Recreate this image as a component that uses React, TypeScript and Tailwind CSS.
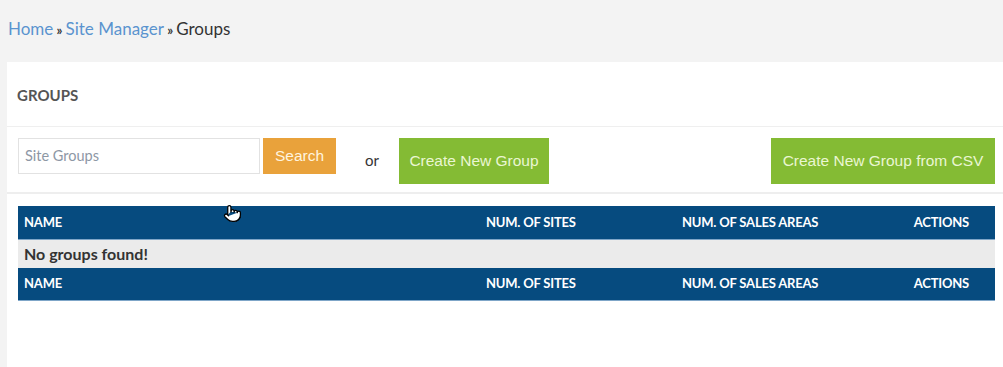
import React from "react";
import { Pointer } from "lucide-react";

const cols = (
  <>
    <div className="flex-1 pl-[6px]">NAME</div>
    <div className="w-[196px]">NUM. OF SITES</div>
    <div className="w-[230px]">NUM. OF SALES AREAS</div>
    <div className="w-[83px] text-right pr-[26px]">ACTIONS</div>
  </>
);

export default function App() {
  return (
    <div className="relative w-[1003px] h-[367px] bg-[#f3f3f3] overflow-hidden font-['Lato','Open_Sans',sans-serif]">
      <div className="h-[62px] pl-[8px] pt-[17px] text-[17px] leading-[24px]">
        <span className="text-[#5a93cf]">Home</span>
        <span className="text-[#333] text-[13px] font-bold"> » </span>
        <span className="text-[#5a93cf]">Site Manager</span>
        <span className="text-[#333] text-[13px] font-bold"> » </span>
        <span className="text-[#333]">Groups</span>
      </div>
      <div className="ml-[7px] bg-white h-[305px]">
        <div className="h-[65px] flex items-center pl-[10px] pt-[3px] text-[15px] font-bold text-[#555] border-b border-[#efefef]">
          GROUPS
        </div>
        <div className="h-[67px] flex items-center pl-[11px] pr-[8px] border-b-2 border-[#eeeeee] font-['Liberation_Sans',Arial,sans-serif]">
          <div className="w-[242px] h-[36px] border border-[#e2e2e2] flex items-center pl-[6px] text-[14.5px] text-[#8d97a5] mt-[-8px] font-['Lato',sans-serif]">
            Site Groups
          </div>
          <div className="ml-[3px] w-[73px] h-[36px] bg-[#e9a23b] text-[#fff4df] text-[15.5px] flex items-center justify-center mt-[-8px]">
            Search
          </div>
          <div className="ml-[29px] w-[34px] text-[15px] text-[#333] font-['Lato',sans-serif] mt-[2px]">or</div>
          <div className="w-[150px] h-[46px] bg-[#84bb34] text-[#eaf6d2] text-[15.5px] flex items-center justify-center mt-[2px]">
            Create New Group
          </div>
          <div className="flex-1" />
          <div className="w-[224px] h-[46px] bg-[#84bb34] text-[#eaf6d2] text-[15.5px] flex items-center justify-center mt-[2px]">
            Create New Group from CSV
          </div>
        </div>
        <div className="pl-[11px] pr-[8px] pt-[12px]">
          <div className="h-[34px] bg-[#064b7f] text-white text-[13px] font-bold tracking-[-0.2px] flex items-center border-b border-[#7fa6c8]">
            {cols}
          </div>
          <div className="h-[28px] bg-[#ebebeb] text-[#333] text-[16px] font-bold flex items-center pl-[6px]">
            No groups found!
          </div>
          <div className="h-[33px] bg-[#064b7f] text-white text-[13px] font-bold tracking-[-0.2px] flex items-center border-b border-[#7fa6c8]">
            {cols}
          </div>
        </div>
      </div>
      <Pointer className="absolute left-[223px] top-[204px] w-[19px] h-[19px] text-black" fill="white" strokeWidth={1.6} />
    </div>
  );
}
